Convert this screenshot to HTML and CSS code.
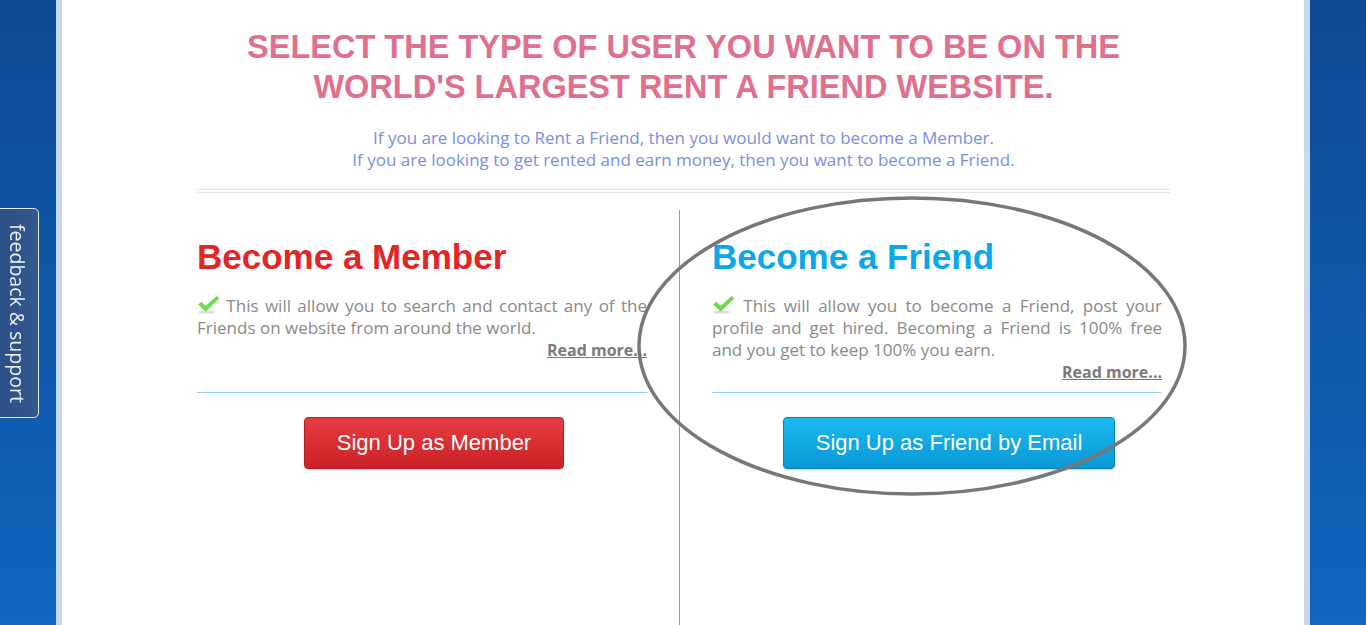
FILE: index.html
```html
<!DOCTYPE html>
<html lang="en">

<head>
    <meta charset="UTF-8">
    <meta name="viewport" content="width=device-width, initial-scale=1.0">
    <title>Select User Type</title>
    <link rel="stylesheet" href="styles.css">
</head>

<body>
    <a class="feedback-tab" href="#">feedback &amp; support</a>

    <div class="page">
        <div class="content">
            <h1>Select the type of user you want to be on the<br>world's largest rent a friend website.</h1>
            <p class="intro">
                If you are looking to Rent a Friend, then you would want to become a Member.<br>
                If you are looking to get rented and earn money, then you want to become a Friend.
            </p>
            <div class="double-rule"></div>

            <div class="columns">
                <div class="col col-member">
                    <h2>Become a Member</h2>
                    <div class="desc">
                        <p>
                            <svg class="check" viewBox="0 0 24 20" width="23" height="19">
                                <ellipse cx="10" cy="18" rx="9" ry="1.6" fill="#dcdcdc" />
                                <path d="M1 10 L4.5 7 L9 11.5 L20.5 1 L23.5 3.5 L9 17.5 Z" fill="#72d94c" />
                            </svg>
                            This will allow you to search and contact any of the Friends on website from around the world.
                        </p>
                        <a class="read-more" href="#">Read more...</a>
                    </div>
                    <div class="rule"></div>
                    <div class="btn-row">
                        <a class="btn btn-red" href="#">Sign Up as Member</a>
                    </div>
                </div>

                <div class="col col-friend">
                    <svg class="circle-mark" viewBox="0 0 552 302" width="552" height="302">
                        <ellipse cx="276" cy="151" rx="273" ry="148" fill="none" stroke="#777" stroke-width="3.5" />
                    </svg>
                    <h2>Become a Friend</h2>
                    <div class="desc">
                        <p>
                            <svg class="check" viewBox="0 0 24 20" width="23" height="19">
                                <ellipse cx="10" cy="18" rx="9" ry="1.6" fill="#dcdcdc" />
                                <path d="M1 10 L4.5 7 L9 11.5 L20.5 1 L23.5 3.5 L9 17.5 Z" fill="#72d94c" />
                            </svg>
                            This will allow you to become a Friend, post your profile and get hired. Becoming a Friend is 100% free and you get to keep 100% you earn.
                        </p>
                        <a class="read-more" href="#">Read more...</a>
                    </div>
                    <div class="rule"></div>
                    <div class="btn-row">
                        <a class="btn btn-blue" href="#">Sign Up as Friend by Email</a>
                    </div>
                </div>
            </div>
        </div>
    </div>
</body>

</html>
```

FILE: styles.css
```css
* {
    box-sizing: border-box;
    margin: 0;
    padding: 0;
}

body {
    font-family: 'Open Sans', 'Noto Sans', sans-serif;
    background: linear-gradient(#0e4a94, #1066c0) fixed;
    min-height: 100vh;
}

.page {
    width: 1254px;
    min-height: 100vh;
    margin: 0 auto;
    background: #fff;
    border-left: 6px solid #c8d9ef;
    border-right: 6px solid #c8d9ef;
}

.content {
    width: 974px;
    margin: 0 auto;
    padding: 27px 0 0 1px;
}

h1 {
    font-family: 'Liberation Sans', Arial, sans-serif;
    font-size: 32.5px;
    line-height: 40px;
    font-weight: bold;
    text-transform: uppercase;
    text-align: center;
    color: #e0708e;
}

.intro {
    margin-top: 20px;
    text-align: center;
    color: #7a8ee2;
    font-size: 17px;
    line-height: 22px;
}

.double-rule {
    margin-top: 18px;
    height: 4px;
    border-top: 1px solid #e6e6e6;
    border-bottom: 1px solid #e6e6e6;
}

.columns {
    display: grid;
    grid-template-columns: 482px 482px;
    margin-top: 17px;
}

.col {
    position: relative;
    min-height: 420px;
    padding-top: 26px;
}

.col-member {
    padding-right: 32px;
}

.col-friend {
    border-left: 1px solid #9a9a9a;
    padding-left: 32px;
}

.circle-mark {
    position: absolute;
    left: -44px;
    top: -15px;
    pointer-events: none;
    z-index: 2;
}

h2 {
    font-family: 'Liberation Sans', Arial, sans-serif;
    font-size: 35px;
    line-height: 42px;
    font-weight: bold;
}

.col-member h2 {
    color: #e42526;
}

.col-friend h2 {
    color: #0aa8ea;
}

.desc {
    width: 450px;
    height: 97px;
    margin-top: 17px;
    color: #8a8a8a;
    font-size: 17px;
    line-height: 22px;
}

.desc p {
    text-align: justify;
}

.check {
    vertical-align: -2px;
}

.read-more {
    display: block;
    text-align: right;
    font-size: 16px;
    font-weight: bold;
    color: #7a7a7a;
    text-decoration: underline;
}

.rule {
    width: 450px;
    border-top: 1px solid #8fd2ec;
}

.btn-row {
    display: flex;
    justify-content: center;
    width: 474px;
    margin-top: 24px;
}

.btn {
    display: inline-block;
    height: 52px;
    line-height: 50px;
    padding: 0 32px;
    border-radius: 4px;
    font-family: 'Liberation Sans', Arial, sans-serif;
    font-size: 22px;
    color: #fff;
    text-decoration: none;
    box-shadow: 0 1px 2px rgba(0, 0, 0, 0.2);
}

.btn-red {
    background: linear-gradient(#e63d42, #cb2026);
    border: 1px solid #b41d22;
}

.btn-blue {
    background: linear-gradient(#1cb9f0, #0899d6);
    border: 1px solid #0a80b6;
}

.feedback-tab {
    position: fixed;
    left: -4px;
    top: 208px;
    width: 43px;
    height: 210px;
    display: flex;
    align-items: center;
    justify-content: center;
    writing-mode: vertical-rl;
    background: linear-gradient(90deg, #2a4f86, #34598f);
    border: 1px solid #e4eaf2;
    border-radius: 0 5px 5px 0;
    color: #eef2f7;
    font-size: 19.5px;
    text-decoration: none;
    z-index: 5;
}
```
